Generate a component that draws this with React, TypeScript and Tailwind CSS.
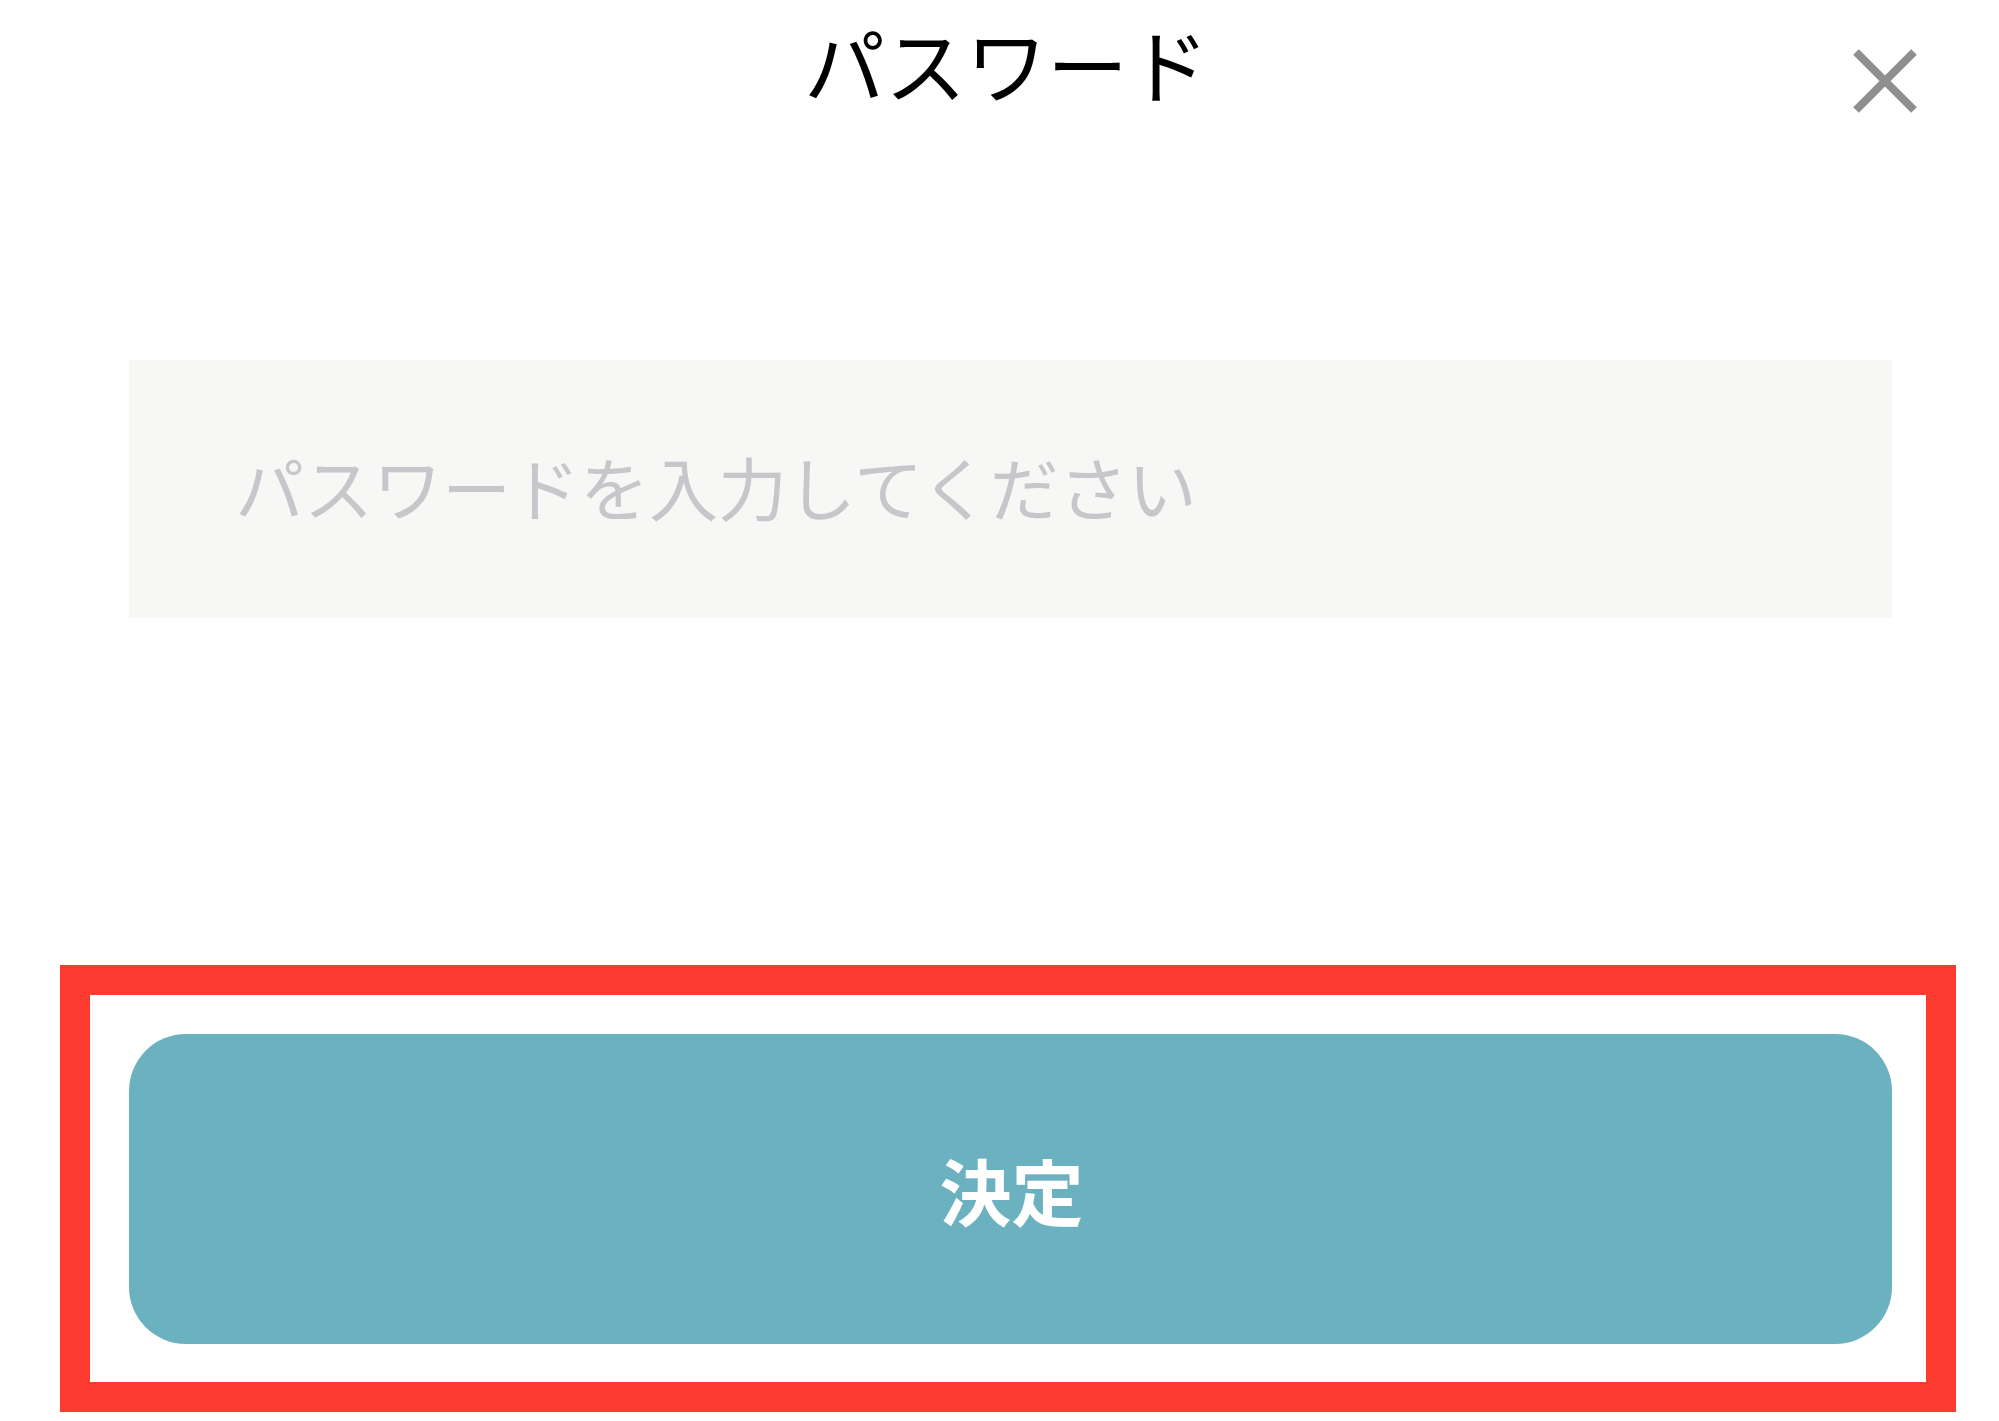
import React from 'react';

const FONT = { fontFamily: '"Noto Sans CJK JP", sans-serif' };

function CloseIcon() {
  return (
    <svg width="68" height="68" viewBox="0 0 68 68" fill="none">
      <path d="M5 5 L63 63 M63 5 L5 63" stroke="#8f8f8f" strokeWidth="8" strokeLinecap="butt" />
    </svg>
  );
}

export default function App() {
  return (
    <div className="w-[1999px] h-[1421px] bg-white overflow-hidden" style={FONT}>
      <div className="grid grid-cols-[1fr_auto_1fr] items-start h-[360px]">
        <div />
        <h1 className="pt-[22px] pl-[14px] text-[81px] leading-[80px] font-normal text-black">
          パスワード
        </h1>
        <div className="flex justify-end pr-[80px] pt-[47px]">
          <button className="p-0">
            <CloseIcon />
          </button>
        </div>
      </div>

      <div className="ml-[129px] w-[1763px] h-[258px] bg-[#f7f7f5] flex items-center">
        <input
          type="password"
          placeholder="パスワードを入力してください"
          className="w-full h-full bg-transparent pl-[106px] pb-[6px] text-[69px] text-gray-800 placeholder:text-[#c6c6cb] outline-none"
          style={FONT}
        />
      </div>

      <div className="ml-[60px] mt-[347px] w-[1896px] h-[447px] border-[30px] border-[#fe3b30] bg-white">
        <button className="ml-[39px] mt-[39px] w-[1763px] h-[310px] rounded-[57px] bg-[#6bb1bf] flex items-center justify-center">
          <span className="text-[72px] leading-none font-semibold text-white pl-[2px]" style={FONT}>
            決定
          </span>
        </button>
      </div>
    </div>
  );
}
